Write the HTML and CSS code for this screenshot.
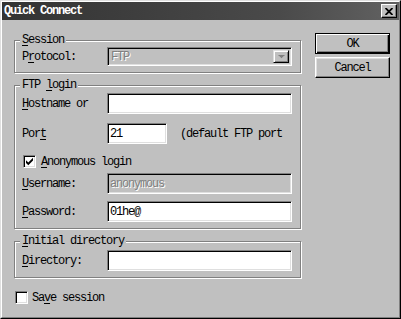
FILE: index.html
```html
<!doctype html>
<html lang="en">
<head>
  <meta charset="UTF-8">
  <title>Quick Connect</title>
  <link rel="stylesheet" href="styles.css">
</head>
<body>
  <div class="window">
    <div class="frame">
      <div class="titlebar">
        <span class="title">Quick Connect</span>
        <span class="close">
          <svg width="8" height="7" viewBox="0 0 8 7">
            <path d="M0.5 0 L7.5 7 M7.5 0 L0.5 7" stroke="#000" stroke-width="1.8"/>
          </svg>
        </span>
      </div>

      <div class="body">
        <div class="left">
          <div class="group session">
            <span class="group-title"><u>S</u>ession</span>
            <div class="row">
              <span class="label">P<u>r</u>otocol:</span>
              <div class="combo">
                <span class="field-text disabled">FTP</span>
                <span class="combo-btn">
                  <svg width="7" height="4" viewBox="0 0 7 4">
                    <path d="M1 1 H6 L3.5 3.5 Z" fill="#fff"/>
                    <path d="M0 0 H7 L3.5 3.5 Z" fill="#808080"/>
                  </svg>
                </span>
              </div>
            </div>
          </div>

          <div class="group login">
            <span class="group-title">FTP <u>l</u>ogin</span>
            <div class="row">
              <span class="label"><u>H</u>ostname or</span>
              <div class="edit"></div>
            </div>
            <div class="row row-port">
              <span class="label">Por<u>t</u></span>
              <div class="edit short"><span class="field-text">21</span></div>
              <span class="note">(default FTP port</span>
            </div>
            <div class="row row-anon">
              <span class="check">
                <svg width="9" height="9" viewBox="0 0 9 9">
                  <path d="M1 3.2 L3.3 5.5 L8 0.8 V3.6 L3.3 8.3 L1 6 Z" fill="#000"/>
                </svg>
              </span>
              <span class="check-text"><u>A</u>nonymous login</span>
            </div>
            <div class="row row-user">
              <span class="label"><u>U</u>sername:</span>
              <div class="edit off"><span class="field-text disabled">anonymous</span></div>
            </div>
            <div class="row row-pass">
              <span class="label"><u>P</u>assword:</span>
              <div class="edit"><span class="field-text">01he@</span></div>
            </div>
          </div>

          <div class="group initdir">
            <span class="group-title"><u>I</u>nitial directory</span>
            <div class="row">
              <span class="label"><u>D</u>irectory:</span>
              <div class="edit"></div>
            </div>
          </div>

          <div class="row row-save">
            <span class="check"></span>
            <span class="check-text">Sa<u>v</u>e session</span>
          </div>
        </div>

        <div class="buttons">
          <div class="btn default">OK</div>
          <div class="btn">Cancel</div>
        </div>
      </div>
    </div>
  </div>
</body>
</html>
```

FILE: styles.css
```css
* {
  box-sizing: border-box;
}
html, body {
  margin: 0;
}
body {
  width: 401px;
  height: 319px;
  overflow: hidden;
  background: #c0c0c0;
  font-family: "Liberation Mono", "Courier New", monospace;
  font-size: 12px;
  letter-spacing: -1.2px;
  color: #000;
}
u {
  text-decoration-thickness: 1px;
  text-underline-offset: 2px;
}

/* window frame */
.window {
  height: 319px;
  border: 1px solid;
  border-color: #dfdfdf #000 #000 #dfdfdf;
  background: #c0c0c0;
}
.frame {
  height: 100%;
  border: 1px solid;
  border-color: #fff #808080 #808080 #fff;
}
.titlebar {
  height: 18px;
  display: flex;
  align-items: center;
  justify-content: space-between;
  padding: 0 2px 0 2px;
  background: linear-gradient(to right, #333, #4a4a4a 70%, #626262);
  color: #fff;
  font-weight: bold;
}
.close {
  width: 16px;
  height: 14px;
  display: flex;
  align-items: center;
  justify-content: center;
  background: #c0c0c0;
  border: 1px solid;
  border-color: #fff #000 #000 #fff;
  box-shadow: inset -1px -1px #808080;
}

.body {
  display: flex;
  gap: 14px;
  padding: 13px 0 0 12px;
}
.left {
  width: 287px;
  margin-top: 7px;
}

/* group boxes */
.group {
  position: relative;
  border: 1px solid #808080;
  box-shadow: 1px 1px 0 #fff, inset 1px 1px 0 #fff;
  padding: 6px 8px 6px 7px;
}
.group-title {
  position: absolute;
  top: -7px;
  left: 5px;
  padding: 0 2px;
  line-height: 12px;
  background: #c0c0c0;
  white-space: nowrap;
}
.login {
  margin-top: 12px;
  padding-top: 7px;
  padding-bottom: 6px;
}
.initdir {
  margin-top: 12px;
  padding-top: 8px;
  padding-bottom: 6px;
}

.row {
  display: flex;
  align-items: center;
  height: 21px;
}
.session .row {
  height: 19px;
}
.row-port { margin-top: 9px; }
.row-anon { margin-top: 7px; }
.row-user { margin-top: 1px; }
.row-pass { margin-top: 7px; }
.row-save { margin-top: 9px; }

.label {
  width: 85px;
  flex: none;
  white-space: nowrap;
}
.note {
  margin-left: 13px;
  white-space: nowrap;
}

/* sunken fields */
.edit, .combo {
  width: 185px;
  height: 21px;
  display: flex;
  align-items: center;
  background: #fff;
  border: 1px solid;
  border-color: #808080 #fff #fff #808080;
  box-shadow: inset 1px 1px #000, inset -1px -1px #dfdfdf;
  padding: 0 2px 0 1px;
}
.edit.short {
  width: 60px;
}
.edit.off, .combo {
  background: #c0c0c0;
}
.combo {
  height: 19px;
  padding: 2px;
  justify-content: space-between;
}
.field-text {
  padding-left: 1px;
  white-space: nowrap;
}
.disabled {
  color: #808080;
  text-shadow: 1px 1px 0 #fff;
}
.combo-btn {
  width: 16px;
  height: 100%;
  display: flex;
  align-items: center;
  justify-content: center;
  background: #c0c0c0;
  border: 1px solid;
  border-color: #dfdfdf #000 #000 #dfdfdf;
  box-shadow: inset 1px 1px #fff, inset -1px -1px #808080;
}

/* check boxes */
.check {
  width: 13px;
  height: 13px;
  flex: none;
  display: flex;
  align-items: center;
  justify-content: center;
  background: #fff;
  border: 1px solid;
  border-color: #808080 #fff #fff #808080;
  box-shadow: inset 1px 1px #000, inset -1px -1px #dfdfdf;
  margin-left: 1px;
}
.check-text {
  margin-left: 5px;
  white-space: nowrap;
}
.row-save .check-text {
  margin-left: 4px;
}

/* push buttons */
.buttons {
  width: 75px;
  display: flex;
  flex-direction: column;
  gap: 3px;
}
.btn {
  height: 21px;
  display: flex;
  align-items: center;
  justify-content: center;
  border: 1px solid;
  border-color: #fff #000 #000 #fff;
  box-shadow: inset -1px -1px #808080, inset 1px 1px #dfdfdf;
}
.btn.default {
  border-color: #000;
  box-shadow: inset 1px 1px #fff, inset -1px -1px #000, inset -2px -2px #808080;
}
```
